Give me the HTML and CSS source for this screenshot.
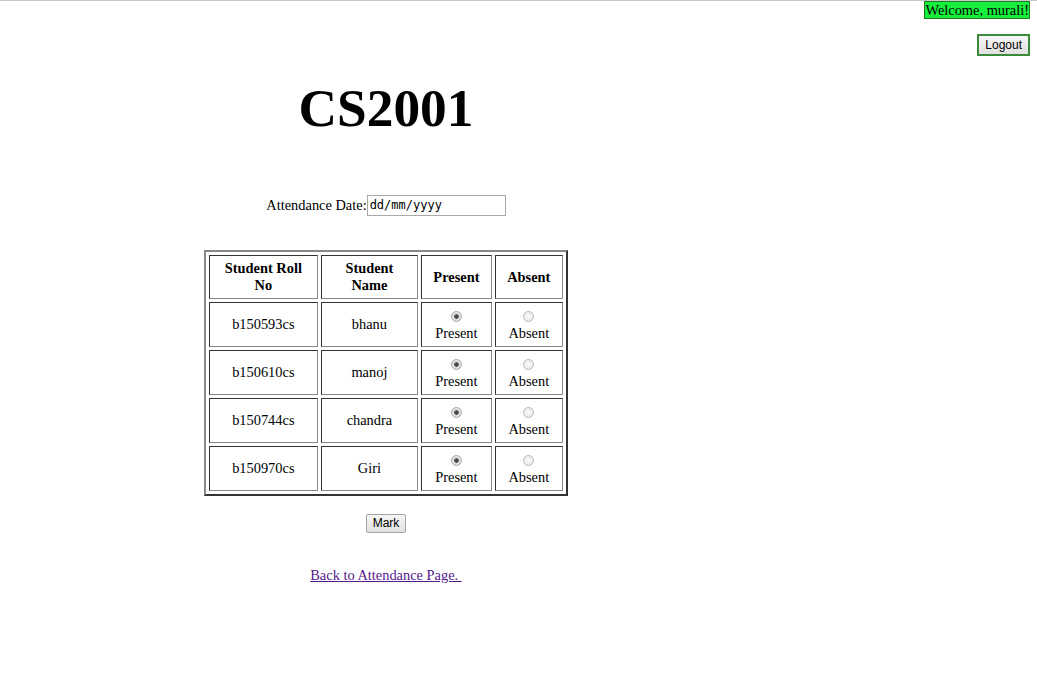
FILE: index.html
```html
<!DOCTYPE html>
<html>
<head>
<meta charset="utf-8">
<title>CS2001 Attendance</title>
<link rel="stylesheet" href="styles.css">
</head>
<body>
<div class="topline"></div>
<div class="page">
  <main class="panel">
    <h1 class="course">CS2001</h1>
    <form class="attendance">
      <div class="date-row">
        <label class="date-label" for="date">Attendance Date:</label><input class="date-input" id="date" type="text" value="dd/mm/yyyy">
      </div>
      <table class="roster">
        <thead>
          <tr>
            <th class="c-roll">Student Roll<br>No</th>
            <th class="c-name">Student<br>Name</th>
            <th class="c-present">Present</th>
            <th class="c-absent">Absent</th>
          </tr>
        </thead>
        <tbody>
          <tr>
            <td>b150593cs</td>
            <td>bhanu</td>
            <td><input class="radio" type="radio" name="s1" checked><br>Present</td>
            <td><input class="radio" type="radio" name="s1"><br>Absent</td>
          </tr>
          <tr>
            <td>b150610cs</td>
            <td>manoj</td>
            <td><input class="radio" type="radio" name="s2" checked><br>Present</td>
            <td><input class="radio" type="radio" name="s2"><br>Absent</td>
          </tr>
          <tr>
            <td>b150744cs</td>
            <td>chandra</td>
            <td><input class="radio" type="radio" name="s3" checked><br>Present</td>
            <td><input class="radio" type="radio" name="s3"><br>Absent</td>
          </tr>
          <tr>
            <td>b150970cs</td>
            <td>Giri</td>
            <td><input class="radio" type="radio" name="s4" checked><br>Present</td>
            <td><input class="radio" type="radio" name="s4"><br>Absent</td>
          </tr>
        </tbody>
      </table>
      <div class="submit-row"><button class="btn" type="button">Mark</button></div>
    </form>
    <p class="back"><a class="back-link" href="#">Back to Attendance Page.&nbsp;</a></p>
  </main>
  <aside class="account">
    <span class="welcome">Welcome, murali!</span>
    <button class="btn btn-logout" type="button">Logout</button>
  </aside>
</div>
</body>
</html>
```
FILE: styles.css
```css
html, body {
  margin: 0;
  padding: 0;
  background: #fff;
}
body {
  font-family: "Liberation Serif", "Times New Roman", serif;
  font-size: 14.4px;
  color: #000;
}
.topline {
  height: 1px;
  background: #c8c8c8;
}
.page {
  display: flex;
  padding: 0 7px 0 8px;
}
.panel {
  width: 756px;
  flex: none;
  text-align: center;
}
.account {
  flex: 1;
  display: flex;
  flex-direction: column;
  align-items: flex-end;
  gap: 15px;
}
.welcome {
  display: inline-block;
  background: #16ef3c;
  border: 1px solid #1f7a25;
  line-height: 16px;
  height: 16px;
  white-space: nowrap;
}
.btn {
  font-family: "Liberation Sans", Arial, sans-serif;
  font-size: 12px;
  color: #000;
  background: linear-gradient(#f6f6f6, #e1e1e1);
  border: 1px solid #a4a4a4;
  border-radius: 2px;
  padding: 1px 6px;
  line-height: 15px;
  margin: 0;
}
.btn-logout {
  border: 2px solid #3b8b3b;
  border-radius: 0;
  padding: 2px 6px 1px;
}
.course {
  font-size: 53.33px;
  font-weight: bold;
  margin: 78px 0 0;
  line-height: 59px;
}
.attendance {
  margin: 0;
}
.date-row {
  margin-top: 56px;
  display: flex;
  justify-content: center;
  align-items: center;
  height: 22px;
}
.date-label {
  line-height: 18px;
  margin-top: -1px;
}
.date-input {
  width: 139px;
  height: 21px;
  box-sizing: border-box;
  border: 1px solid #a9a9a9;
  padding: 1px 2px;
  font-family: "DejaVu Sans Mono", "Liberation Mono", monospace;
  font-size: 12px;
  color: #000;
  margin: 0;
}
.roster {
  margin: 34px auto 0;
  border: 2px solid;
  border-color: #888 #333 #333 #888;
  border-spacing: 3px;
  table-layout: fixed;
  width: 364px;
}
.roster th,
.roster td {
  border: 1px solid;
  border-color: #333 #888 #888 #333;
  padding: 2px 1px;
  text-align: center;
  vertical-align: middle;
  line-height: 17px;
}
.roster th {
  height: 44px;
  box-sizing: border-box;
  font-weight: bold;
}
.roster td {
  height: 45px;
  box-sizing: border-box;
}
.c-roll { width: 108px; }
.c-name { width: 97px; }
.c-present { width: 70px; }
.c-absent { width: 68px; }
.radio {
  -webkit-appearance: none;
  appearance: none;
  width: 11px;
  height: 11px;
  border-radius: 50%;
  border: 1px solid #b8b8b8;
  background: radial-gradient(circle, #fafafa 0, #e6e6e6 100%);
  margin: 3px 0 2px;
  vertical-align: top;
  box-sizing: border-box;
}
.radio:checked {
  border-color: #a8a8a8;
  background: radial-gradient(circle, #444 0, #555 2px, #dcdcdc 2.6px, #ececec 100%);
}
.submit-row {
  margin-top: 18px;
}
.back {
  margin: 34px 0 0;
}
.back-link {
  color: #551a8b;
  text-decoration: underline;
}
```
